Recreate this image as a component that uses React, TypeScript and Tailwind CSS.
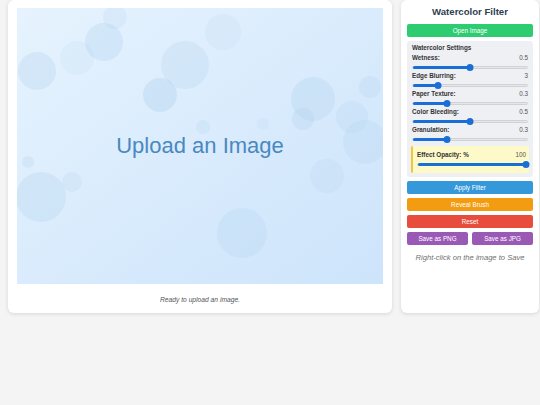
import React from "react";

const circles: [number, number, number, number][] = [
  // cx, cy, r, opacity (relative to image area at 17,8)
  [98, 9, 12, 0.2],
  [87, 34, 19, 0.35],
  [60, 50, 17, 0.15],
  [20, 63, 19, 0.35],
  [168, 57, 24, 0.28],
  [143, 87, 17, 0.4],
  [186, 119, 7, 0.25],
  [206, 24, 18, 0.15],
  [296, 91, 22, 0.35],
  [353, 79, 11, 0.28],
  [286, 111, 11, 0.35],
  [335, 109, 16, 0.25],
  [348, 134, 22, 0.28],
  [246, 116, 6, 0.15],
  [11, 154, 6, 0.28],
  [24, 189, 25, 0.32],
  [55, 174, 10, 0.22],
  [225, 225, 25, 0.28],
  [310, 168, 17, 0.22],
];

function Slider({ pct }: { pct: number }) {
  return (
    <div className="relative h-[10px] flex items-center">
      <div className="relative w-full h-[3px] rounded-full bg-[#e4e6ea] border border-[#cfd3d8]">
        <div
          className="absolute left-0 top-[-1px] h-[3px] rounded-full bg-[#1a6fd6]"
          style={{ width: `${pct}%` }}
        />
      </div>
      <div
        className="absolute w-[7px] h-[7px] rounded-full bg-[#1a6fd6] -translate-x-1/2"
        style={{ left: `${pct}%` }}
      />
    </div>
  );
}

function Row({ label, value, pct }: { label: string; value: string; pct: number }) {
  return (
    <div>
      <div className="flex justify-between items-center h-[8px] text-[6.3px] text-[#333]">
        <span className="font-bold">{label}</span>
        <span className="text-[#555]">{value}</span>
      </div>
      <Slider pct={pct} />
    </div>
  );
}

export default function App() {
  return (
    <div
      className="min-h-[405px] w-[540px] overflow-hidden bg-[#f4f4f4] flex gap-[9px] pl-2"
      style={{ fontFamily: '"Liberation Sans", Arial, sans-serif' }}
    >
      <div className="w-[384px] h-[313px] shrink-0 bg-white rounded-md shadow-[0_1px_4px_rgba(0,0,0,0.12)] px-[9px] pt-2">
        <div className="relative h-[276px] bg-gradient-to-br from-[#e6f3fe] to-[#cde4fb] overflow-hidden flex items-center justify-center">
          <svg className="absolute inset-0" width="368" height="276">
            {circles.map(([cx, cy, r, o], i) => (
              <circle key={i} cx={cx} cy={cy} r={r} fill="#b4d3ee" fillOpacity={o} />
            ))}
          </svg>
          <span className="relative text-[22px] text-[#4a88c0] -mt-[2px]">Upload an Image</span>
        </div>
        <div className="text-center italic text-[6.7px] text-[#555] mt-[11px]">Ready to upload an image.</div>
      </div>

      <div className="w-[138px] h-[313px] shrink-0 bg-white rounded-md shadow-[0_1px_4px_rgba(0,0,0,0.12)] px-[6px] pt-[5px]">
        <div className="text-center font-bold text-[9.6px] leading-[14px] text-[#2c3e50]">Watercolor Filter</div>
        <div className="mt-[5px] h-[13px] rounded-[2px] bg-[#2ecc71] text-white text-[6.3px] flex items-center justify-center">
          Open Image
        </div>
        <div className="mt-[4px] rounded-[3px] bg-[#eef0f4] px-[5px] pt-[3px] pb-[4px]">
          <div className="h-[8px] flex items-center font-bold text-[6.3px] text-[#333]">Watercolor Settings</div>
          <div className="mt-[2px] flex flex-col">
            <Row label="Wetness:" value="0.5" pct={50} />
            <Row label="Edge Blurring:" value="3" pct={22} />
            <Row label="Paper Texture:" value="0.3" pct={30} />
            <Row label="Color Bleeding:" value="0.5" pct={50} />
            <Row label="Granulation:" value="0.3" pct={30} />
          </div>
          <div className="mt-[2px] -mx-[1px] bg-[#fdf9c9] border-l-2 border-[#e9c93a] rounded-[2px] pl-[4px] pr-[3px] pt-[5px] pb-[4px]">
            <div className="flex justify-between items-center h-[8px] text-[6.3px] text-[#333]">
              <span className="font-bold">Effect Opacity: %</span>
              <span className="text-[#555]">100</span>
            </div>
            <Slider pct={100} />
          </div>
        </div>
        <div className="mt-[4px] flex flex-col gap-[4px] text-white text-[6.3px]">
          <div className="h-[13px] rounded-[2px] bg-[#3498db] flex items-center justify-center">Apply Filter</div>
          <div className="h-[13px] rounded-[2px] bg-[#f39c12] flex items-center justify-center">Reveal Brush</div>
          <div className="h-[13px] rounded-[2px] bg-[#e74c3c] flex items-center justify-center">Reset</div>
          <div className="flex gap-[4px]">
            <div className="flex-1 h-[13px] rounded-[2px] bg-[#9b59b6] flex items-center justify-center">Save as PNG</div>
            <div className="flex-1 h-[13px] rounded-[2px] bg-[#9b59b6] flex items-center justify-center">Save as JPG</div>
          </div>
        </div>
        <div className="mt-[7px] text-center italic text-[7.6px] text-[#6f6f6f]">Right-click on the image to Save</div>
      </div>
    </div>
  );
}
